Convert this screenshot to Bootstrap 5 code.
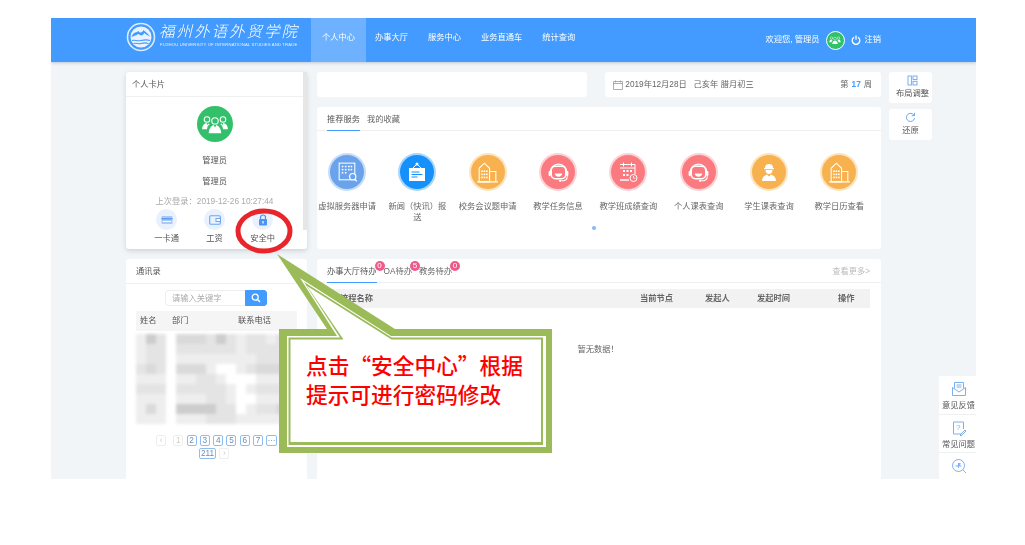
<!DOCTYPE html>
<html lang="zh-CN">
<head>
<meta charset="utf-8">
<title>个人中心</title>
<link href="https://cdn.jsdelivr.net/npm/bootstrap@5.3.0/dist/css/bootstrap.min.css" rel="stylesheet">
<style>
html,body{height:545px;overflow:hidden;background:#fff}
body{margin:0;font-family:"Liberation Sans","Noto Sans CJK SC",sans-serif;font-size:8.25px;line-height:1.3;color:#666}
.shell{width:925px;height:461px;margin:18px 0 0 51px;background:#f2f5f8;overflow:hidden;position:relative;filter:blur(.45px)}
.topbar{height:44px;background:#439bff;box-shadow:0 1px 3px rgba(60,90,130,.3);color:#fff;padding-left:75px;position:relative}
.brand{width:185px;height:44px;position:relative;flex:none}
.brand-cn{position:absolute;left:33px;top:2px;font-size:15.5px;letter-spacing:2px;line-height:20px;font-style:italic;font-weight:300;white-space:nowrap;font-family:"Noto Sans CJK SC",sans-serif}
.brand-en{position:absolute;left:34px;top:24px;font-size:4.25px;line-height:5px;letter-spacing:.12px;white-space:nowrap;opacity:.85}
.brand svg{position:absolute;left:0;top:4px}
.topnav a{display:block;height:44px;line-height:40px;padding:0 10px;color:#fff;text-decoration:none}
.topnav a.on{background:#6db1ff;padding:0 11px;margin-right:-1px}
.userbox{margin-right:95px;gap:6px}
.userbox .hello{margin-top:1px}
.ava-sm{width:19px;height:19px;border-radius:50%;background:#33c06b;border:1.5px solid #fff;display:flex;align-items:center;justify-content:center}
.body-row{padding:10px 0 0 75px;gap:10px}
.col-left{width:181px;gap:10px}
.col-main{width:564px}
.col-side{width:43px;margin-left:-2px;gap:6px}
.sheet{border:0;border-radius:3px;background:#fff}
.sheet-head{height:25px;border-bottom:1px solid #eef0f2;padding:0 10px;line-height:26px;color:#555}
.card-me .sheet-head{padding:0 6px}
.card-me{height:177px;box-shadow:0 2px 5px rgba(80,90,110,.22);padding-right:4px;position:relative}
.card-me::after{content:"";position:absolute;right:0;top:0;width:4px;height:158px;background:#e6e6e6}
.ava-lg{width:36px;height:36px;border-radius:50%;background:#33c06b;margin:9px auto 0;display:flex;align-items:center;justify-content:center}
.me-name{height:21px;line-height:21px;text-align:center;color:#555}
.me-last{text-align:center;color:#aaa;line-height:14px;margin-top:3px}
.quick{justify-content:center;gap:0;margin-top:0}
.quick>div{width:48px;text-align:center;color:#555}
.quick-disc{width:21px;height:21px;border-radius:50%;background:#e8f1fd;margin:0 auto 4px;display:flex;align-items:center;justify-content:center}
.card-book{height:230px}
.book-body{padding:6px 10px 0}
.finder{width:102px;height:16px;margin:0 0 5px 29px;flex-wrap:nowrap}
.finder .form-control{height:16px;min-height:0;padding:0 6px;font-size:8.25px;border:1px solid #eceff2;border-radius:3px 0 0 3px;color:#aaa;box-shadow:none}
.finder .form-control::placeholder{color:#aaa}
.finder .btn{height:16px;width:22px;padding:0;border-radius:0 3px 3px 0;background:#439bff;border-color:#439bff;display:flex;align-items:center;justify-content:center}
.book-head{height:20px;line-height:20px;background:#f5f5f5;color:#555;width:161px;position:relative}
.book-head span:nth-child(1){margin-left:4px;width:32px}
.book-head span:nth-child(2){width:66px}
.mosaic{display:grid;grid-template-columns:repeat(16,10px);grid-auto-rows:10px;margin-top:3px;filter:blur(1.4px)}
.mosaic i{display:block}
.t0{background:#fff}.t1{background:#eee}.t2{background:#e4e4e4}.t3{background:#dadada}.t4{background:#cdcdcd}
.pager{margin:11px 0 0 20px;width:130px;gap:2px 3.3px;flex-wrap:wrap}
.pg{min-width:10px;height:11px;line-height:9px;border:1px solid #8fbdee;border-radius:2px;text-align:center;color:#6b8fb8;font-size:8.25px;background:#fff}
.pg.off{border-color:#eee;color:#ccc}
.pg.wide{min-width:17px;margin-left:43px}
.strip{height:25px}
.strip-blank{width:270px;border-radius:3px}
.strip-date{width:276px;margin-left:18px;padding:1px 9px 0 8px;color:#666}
.strip-date b{color:#439bff;margin:0 3px}
.card-svc{height:142px;margin-top:10px;position:relative}
.tabset{gap:7px;height:24px;padding:0 10px;border-bottom:1px solid #eef0f2}
.tabset a{display:block;height:24px;line-height:25px;color:#666;text-decoration:none;position:relative}
.tabset a.on{color:#555;border-bottom:1.5px solid #439bff}
.svc-row{margin:22px 0 0 -5px}
.svc{width:70.3px;padding:0 6px;text-align:center;color:#666;flex:none}
.svc-disc{width:34px;height:34px;border-radius:50%;margin:2px auto 13px;display:flex;align-items:center;justify-content:center}
.c-steel{background:#6aa3ec;box-shadow:0 0 0 2px #c6dcf8}
.c-blue{background:#1690fb;box-shadow:0 0 0 2px #a9d6fd}
.c-amber{background:#f7b24f;box-shadow:0 0 0 2px #fde4bf}
.c-rose{background:#fb7a80;box-shadow:0 0 0 2px #fcd2d5}
.dotmark{width:4px;height:4px;border-radius:50%;background:#86b9f3;position:absolute;left:275px;top:119px}
.card-todo{height:230px;margin-top:10px;position:relative}
.count{position:absolute;top:2px;right:-8px;width:10px;height:10px;border-radius:50%;background:#ee5b8b;color:#fff;font-size:8px;line-height:10px;text-align:center;z-index:1}
.more{position:absolute;right:11px;top:8px;color:#bbb}
.todo-head{height:19px;line-height:19px;margin:6px 11px 0 10px;background:#f2f2f2;font-weight:700;color:#666;position:relative}
.todo-head span{position:absolute;top:0}
.none{text-align:center;padding-top:37px;margin-right:2px}
.tool{height:31px;text-align:center;color:#555;padding-top:3px;line-height:11px;border-radius:3px}
.tool svg{margin-bottom:2px}
.dock{position:absolute;right:0;top:358px;width:37px;height:103px;background:#fff;overflow:hidden}
.dock>div{height:38.5px;border-bottom:1px solid #eef0f2;padding:5px 0 0 2px;white-space:nowrap;color:#555;text-align:center;line-height:11px}
.dock svg{margin-bottom:3px}
.ring{position:absolute;left:232px;top:205px}
.note{position:absolute;left:275px;top:250px;width:280px;height:206px}
.note svg{position:absolute;left:0;top:0}
.note-text{position:absolute;left:31px;top:100px;color:#f00;font:500 21.7px/29px "Noto Sans CJK SC",sans-serif;white-space:nowrap;margin:0}
</style>
</head>
<body>
<svg width="0" height="0" class="d-block position-absolute">
<defs>
<symbol id="i-people" viewBox="0 0 36 36"><g fill="#fff"><circle cx="9" cy="13" r="3.1" fill="none" stroke="#fff" stroke-width="1.2"/><circle cx="27" cy="13" r="3.1" fill="none" stroke="#fff" stroke-width="1.2"/><circle cx="18" cy="14.5" r="3.6" fill="none" stroke="#fff" stroke-width="1.2"/><path d="M3.5 24c0-4 2-6.500 5-7l1 2 1-1.500 1.500.8c-2 1.500-3 3.500-3 5.700z"/><path d="M32.500 24c0-4-2-6.500-5-7l-1 2-1-1.500-1.500.8c2 1.500 3 3.500 3 5.700z"/><path d="M11 28.500c0-5 2.500-8.500 5.500-9.500l1.500 3 1.500-3c3 1 5.500 4.500 5.500 9.500z"/></g></symbol>
<symbol id="i-tower" viewBox="0 0 24 24"><g fill="none" stroke="#fff" stroke-width="1"><path d="M4 21V8l5-5 5 5v13z"/><path d="M14 11h6v10h-6M2 21h20"/></g><g fill="#fff"><rect x="6" y="10" width="1.500" height="1.500"/><rect x="8.300" y="10" width="1.500" height="1.500"/><rect x="10.600" y="10" width="1.500" height="1.500"/><rect x="6" y="13" width="1.500" height="1.500"/><rect x="8.300" y="13" width="1.500" height="1.500"/><rect x="10.600" y="13" width="1.500" height="1.500"/><rect x="6" y="16" width="1.500" height="1.500"/><rect x="8.300" y="16" width="1.500" height="1.500"/><rect x="10.600" y="16" width="1.500" height="1.500"/></g></symbol>
<symbol id="i-head" viewBox="0 0 24 24"><path d="M4 12a8 8 0 0 1 16 0" fill="none" stroke="#fff" stroke-width="1.300"/><rect x="5" y="6" width="14" height="12" rx="4" fill="none" stroke="#fff" stroke-width="1.500"/><path d="M8.500 13h7c0 2-1.500 3-3.500 3s-3.500-1-3.500-3z" fill="#fff"/><rect x="2.500" y="10.500" width="2.200" height="5" rx="1" fill="#fff"/><rect x="19.300" y="10.500" width="2.200" height="5" rx="1" fill="#fff"/><path d="M20.500 15.500c0 3-2.500 4.500-6 4.500" fill="none" stroke="#fff"/><circle cx="13.500" cy="20" r="1.100" fill="#fff"/></symbol>
</defs>
</svg>

<div class="shell">
  <header class="topbar d-flex align-items-start">
    <div class="brand">
      <svg width="30" height="30" viewBox="0 0 30 30"><circle cx="15" cy="15" r="13.500" fill="none" stroke="#dcecff" stroke-width="1.600"/><circle cx="15" cy="15" r="10.500" fill="#e9f3ff"/><path d="M5.500 15c2.500-6 5-4 7-6 2 3 4 1 5-1 2 2 4 3 7 7-3-2-4-2-6-4-2 3-4 3-6 1-2 1-4 2-7 3z" fill="#439bff"/><path d="M6 18.500c3-1.200 5 1 9 0s6-1 9 0M7.500 21.500c3-1 5 .8 7.500 0s5-.8 7.500 0" fill="none" stroke="#439bff" stroke-width="1.100"/></svg>
      <div class="brand-cn">福州外语外贸学院</div>
      <div class="brand-en">FUZHOU UNIVERSITY OF INTERNATIONAL STUDIES AND TRADE</div>
    </div>
    <nav class="topnav d-flex">
      <a class="on" href="#">个人中心</a>
      <a href="#">办事大厅</a>
      <a href="#">服务中心</a>
      <a href="#">业务直通车</a>
      <a href="#">统计查询</a>
    </nav>
    <div class="userbox ms-auto d-flex align-items-center h-100">
      <span class="hello">欢迎您, 管理员</span>
      <span class="ava-sm"><svg width="14" height="14"><use href="#i-people"/></svg></span>
      <span class="d-flex align-items-center gap-1"><svg width="10" height="10" viewBox="0 0 10 10"><path d="M3 2.300a3.800 3.800 0 1 0 4 0" fill="none" stroke="#fff" stroke-width="1.300"/><path d="M5 .5v4.300" stroke="#fff" stroke-width="1.300"/></svg>注销</span>
    </div>
  </header>

  <div class="body-row d-flex align-items-start">
    <aside class="col-left d-flex flex-column">
      <section class="card sheet card-me">
        <div class="sheet-head">个人卡片</div>
        <div class="ava-lg"><svg width="32" height="32"><use href="#i-people"/></svg></div>
        <div class="me-name mt-2">管理员</div>
        <div class="me-name">管理员</div>
        <div class="me-last">上次登录：2019-12-26 10:27:44</div>
        <div class="quick d-flex">
          <div><div class="quick-disc"><svg width="12" height="10" viewBox="0 0 12 10"><rect x=".5" y="1" width="11" height="8" rx="1" fill="#a9c9f5"/><rect x=".5" y="3" width="11" height="1.500" fill="#5e9df0"/><rect x="2" y="6" width="8" height="1" fill="#fff"/></svg></div>一卡通</div>
          <div><div class="quick-disc"><svg width="12" height="10" viewBox="0 0 12 10"><rect x=".7" y=".7" width="10.600" height="8.600" rx="1" fill="none" stroke="#6ea7f0" stroke-width="1.100"/><rect x="7" y="3.500" width="4.500" height="3" fill="#fff" stroke="#6ea7f0"/></svg></div>工资</div>
          <div><div class="quick-disc"><svg width="10" height="12" viewBox="0 0 10 12"><path d="M2.500 5V3.500a2.500 2.500 0 0 1 5 0V5" fill="none" stroke="#4b94f2" stroke-width="1.200"/><rect x="1" y="5" width="8" height="6.500" rx="1" fill="#4b94f2"/><rect x="4.400" y="7" width="1.200" height="2.500" fill="#fff"/></svg></div>安全中</div>
        </div>
      </section>

      <section class="card sheet card-book">
        <div class="sheet-head">通讯录</div>
        <div class="book-body">
          <div class="input-group finder">
            <input class="form-control" type="text" placeholder="请输入关键字">
            <button class="btn btn-primary" type="button" aria-label="搜索"><svg width="10" height="10" viewBox="0 0 10 10"><circle cx="4.200" cy="4.200" r="3" fill="none" stroke="#fff" stroke-width="1.300"/><path d="M6.500 6.500 9 9" stroke="#fff" stroke-width="1.400"/></svg></button>
          </div>
          <div class="book-head d-flex"><span>姓名</span><span>部门</span><span>联系电话</span></div>
          <div class="mosaic">
            <i class="t1"></i><i class="t4"></i><i class="t2"></i><i class="t0"></i><i class="t3"></i><i class="t3"></i><i class="t3"></i><i class="t2"></i><i class="t4"></i><i class="t2"></i><i class="t1"></i><i class="t2"></i><i class="t2"></i><i class="t1"></i><i class="t2"></i><i class="t2"></i>
            <i class="t1"></i><i class="t2"></i><i class="t2"></i><i class="t0"></i><i class="t2"></i><i class="t2"></i><i class="t2"></i><i class="t2"></i><i class="t2"></i><i class="t2"></i><i class="t1"></i><i class="t2"></i><i class="t2"></i><i class="t2"></i><i class="t2"></i><i class="t2"></i>
            <i class="t1"></i><i class="t2"></i><i class="t2"></i><i class="t0"></i><i class="t1"></i><i class="t1"></i><i class="t1"></i><i class="t1"></i><i class="t1"></i><i class="t1"></i><i class="t1"></i><i class="t1"></i><i class="t2"></i><i class="t2"></i><i class="t2"></i><i class="t2"></i>
            <i class="t2"></i><i class="t3"></i><i class="t2"></i><i class="t0"></i><i class="t3"></i><i class="t3"></i><i class="t3"></i><i class="t1"></i><i class="t0"></i><i class="t0"></i><i class="t1"></i><i class="t2"></i><i class="t3"></i><i class="t3"></i><i class="t3"></i><i class="t3"></i>
            <i class="t1"></i><i class="t1"></i><i class="t1"></i><i class="t0"></i><i class="t1"></i><i class="t1"></i><i class="t2"></i><i class="t2"></i><i class="t1"></i><i class="t0"></i><i class="t0"></i><i class="t0"></i><i class="t1"></i><i class="t1"></i><i class="t1"></i><i class="t1"></i>
            <i class="t2"></i><i class="t2"></i><i class="t2"></i><i class="t0"></i><i class="t2"></i><i class="t2"></i><i class="t2"></i><i class="t2"></i><i class="t2"></i><i class="t1"></i><i class="t0"></i><i class="t1"></i><i class="t2"></i><i class="t2"></i><i class="t2"></i><i class="t2"></i>
            <i class="t1"></i><i class="t1"></i><i class="t1"></i><i class="t0"></i><i class="t1"></i><i class="t1"></i><i class="t1"></i><i class="t2"></i><i class="t2"></i><i class="t1"></i><i class="t0"></i><i class="t0"></i><i class="t1"></i><i class="t1"></i><i class="t1"></i><i class="t1"></i>
            <i class="t1"></i><i class="t3"></i><i class="t1"></i><i class="t0"></i><i class="t4"></i><i class="t4"></i><i class="t4"></i><i class="t4"></i><i class="t2"></i><i class="t2"></i><i class="t0"></i><i class="t1"></i><i class="t2"></i><i class="t2"></i><i class="t3"></i><i class="t2"></i>
            <i class="t1"></i><i class="t1"></i><i class="t1"></i><i class="t0"></i><i class="t1"></i><i class="t1"></i><i class="t1"></i><i class="t2"></i><i class="t2"></i><i class="t2"></i><i class="t1"></i><i class="t1"></i><i class="t1"></i><i class="t1"></i><i class="t1"></i><i class="t1"></i>
          </div>
          <div class="pager d-flex">
            <span class="pg off">‹</span><span class="pg off ms-1">1</span><span class="pg">2</span><span class="pg">3</span><span class="pg">4</span><span class="pg">5</span><span class="pg">6</span><span class="pg">7</span><span class="pg">···</span>
            <span class="pg wide">211</span><span class="pg off">›</span>
          </div>
        </div>
      </section>
    </aside>

    <main class="col-main">
      <div class="strip d-flex">
        <div class="card sheet strip-blank"></div>
        <div class="card sheet strip-date flex-row align-items-center justify-content-between">
          <span class="d-flex align-items-center gap-0"><svg class="me-0" width="10" height="10" viewBox="0 0 10 10"><path d="M.5 1.500h9v8h-9zM.5 3.500h9M2.500.5v2M7.500.5v2" fill="none" stroke="#999" stroke-width=".8"/></svg>&nbsp;2019年12月28日 &nbsp; 己亥年 腊月初三</span>
          <span>第<b>17</b>周</span>
        </div>
      </div>

      <section class="card sheet card-svc">
        <div class="tabset d-flex"><a class="on" href="#">推荐服务</a><a href="#">我的收藏</a></div>
        <div class="svc-row d-flex align-items-start">
          <div class="svc"><div class="svc-disc c-steel"><svg width="25" height="25" viewBox="0 0 24 24"><rect x="4" y="3" width="15" height="16" fill="none" stroke="#fff"/><g fill="#fff"><rect x="6.500" y="5.500" width="1.500" height="1.500"/><rect x="9.500" y="5.500" width="1.500" height="1.500"/><rect x="12.500" y="5.500" width="1.500" height="1.500"/><rect x="15" y="5.500" width="1.500" height="1.500"/><rect x="6.500" y="8.500" width="1.500" height="1.500"/><rect x="9.500" y="8.500" width="1.500" height="1.500"/><rect x="12.500" y="8.500" width="1.500" height="1.500"/><rect x="15" y="8.500" width="1.500" height="1.500"/><rect x="6.500" y="11.500" width="1.500" height="1.500"/><rect x="9.500" y="11.500" width="1.500" height="1.500"/></g><circle cx="17" cy="16" r="3" fill="#6aa3ec" stroke="#fff" stroke-width="1.100"/><path d="m19 18.500 2 2" stroke="#fff" stroke-width="1.200"/></svg></div>虚拟服务器申请</div>
          <div class="svc"><div class="svc-disc c-blue"><svg width="24" height="24" viewBox="0 0 24 24"><rect x="4" y="8" width="16" height="13" fill="#fff"/><path d="M8 8l4-4 4 4" fill="none" stroke="#fff"/><circle cx="12" cy="4" r="1.500" fill="#fff"/><path d="M6.500 12h8M6.500 14.500h11M6.500 17h6" stroke="#1690fb" stroke-width="1.200"/></svg></div>新闻（快讯）报送</div>
          <div class="svc"><div class="svc-disc c-amber"><svg width="25" height="25"><use href="#i-tower"/></svg></div>校务会议题申请</div>
          <div class="svc"><div class="svc-disc c-rose"><svg width="25" height="25"><use href="#i-head"/></svg></div>教学任务信息</div>
          <div class="svc"><div class="svc-disc c-rose"><svg width="24" height="24" viewBox="0 0 24 24"><path d="M4 4.500h15V14M13 20H4z" fill="none" stroke="#fff"/><path d="M4 8h15M7.500 2.500v4M15.500 2.500v4" stroke="#fff"/><g fill="#fff"><rect x="7" y="10" width="2" height="2"/><rect x="10.500" y="10" width="2" height="2"/><rect x="14" y="10" width="2" height="2"/><rect x="7" y="14" width="2" height="2"/><rect x="10.500" y="14" width="2" height="2"/></g><circle cx="17.500" cy="18" r="3.500" fill="none" stroke="#fff"/><path d="M17.500 16v2.200h1.800" fill="none" stroke="#fff" stroke-width=".8"/></svg></div>教学班成绩查询</div>
          <div class="svc"><div class="svc-disc c-rose"><svg width="25" height="25"><use href="#i-head"/></svg></div>个人课表查询</div>
          <div class="svc"><div class="svc-disc c-amber"><svg width="24" height="24" viewBox="0 0 24 24"><g fill="#fff"><path d="M8 8a4 4 0 0 1 8 0z"/><rect x="7" y="8" width="10" height="1.200"/><path d="M8.500 10h7c0 2.500-1.500 4-3.500 4s-3.500-1.500-3.500-4z"/><path d="M5 21c0-3.500 2-5.500 5-6.500l2 2 2-2c3 1 5 3 5 6.500z"/></g></svg></div>学生课表查询</div>
          <div class="svc"><div class="svc-disc c-amber"><svg width="25" height="25"><use href="#i-tower"/></svg></div>教学日历查看</div>
        </div>
        <span class="dotmark"></span>
      </section>

      <section class="card sheet card-todo">
        <div class="tabset d-flex">
          <a class="on" href="#">办事大厅待办<span class="count">0</span></a>
          <a href="#">OA待办<span class="count">5</span></a>
          <a href="#">教务待办<span class="count">0</span></a>
        </div>
        <a class="more text-decoration-none" href="#">查看更多&gt;</a>
        <div class="todo-head">
          <span style="left:13px">流程名称</span><span style="left:313px">当前节点</span><span style="left:378px">发起人</span><span style="left:430px">发起时间</span><span style="left:511px">操作</span>
        </div>
        <div class="none">暂无数据！</div>
      </section>
    </main>

    <aside class="col-side d-flex flex-column">
      <div class="card sheet tool ps-1"><svg class="mx-auto" width="11" height="11" viewBox="0 0 11 11"><g fill="none" stroke="#6ea7f0" stroke-width=".9"><rect x="1" y="1" width="3.400" height="9"/><rect x="6" y="1" width="4" height="3.500"/><rect x="6" y="6.300" width="4" height="3.700"/></g></svg>布局调整</div>
      <div class="card sheet tool"><svg class="mx-auto" width="11" height="11" viewBox="0 0 11 11"><path d="M9 3.200A4.100 4.100 0 1 0 9.600 6" fill="none" stroke="#6ea7f0" stroke-width="1"/><path d="M9.500 .8v2.900H6.700" fill="none" stroke="#6ea7f0" stroke-width="1"/></svg>还原</div>
    </aside>
  </div>

  <div class="dock">
    <div><svg class="d-block mx-auto" width="16" height="16" viewBox="0 0 16 16"><g fill="none" stroke="#7eb0f0" stroke-width="1"><path d="M1.500 6.500v8h13v-8"/><path d="M3.500 7.500V1.500h9v6"/><path d="M1.500 6.500 8 11l6.500-4.500"/><path d="M5.500 4h5M5.500 6h5"/></g></svg>意见反馈</div>
    <div><svg class="d-block mx-auto" width="16" height="16" viewBox="0 0 16 16"><g fill="none" stroke="#7eb0f0" stroke-width="1"><path d="M10.500 14H2.500V2h10v7"/><path d="M9 15l5-5 1 1-5 5z"/></g><text x="5" y="10" font-size="8" fill="#7eb0f0">?</text></svg>常见问题</div>
    <div class="border-0"><svg class="d-block mx-auto" width="16" height="16" viewBox="0 0 16 16"><g fill="none" stroke="#7eb0f0" stroke-width="1"><circle cx="7.500" cy="7.500" r="6"/><path d="m12 12 3 3M4.500 8H7l2-3-.5 3h2M7.500 5v5"/></g></svg></div>
  </div>
</div>

<svg class="ring" width="64" height="52" viewBox="0 0 64 52" aria-hidden="true"><ellipse cx="32" cy="26" rx="26" ry="20" fill="none" stroke="#e8252b" stroke-width="5"/></svg>

<div class="note">
  <svg width="280" height="206" viewBox="275 250 280 206" aria-hidden="true">
    <polygon fill="#9bbb59" points="279,329 327,329 277,254 395,329 552,329 552,453 279,453"/>
    <polygon fill="#fff" points="287,336 337,336 300,278 391,336 546,336 546,447 287,447"/>
    <polygon fill="#9bbb59" points="288.500,337.500 340,337.500 304,282 391.700,337.500 543,337.500 543,445 288.500,445"/>
    <polygon fill="#fff" points="290.500,339.500 343.500,339.500 307,286 391.500,339.500 541,339.500 541,442 290.500,442"/>
  </svg>
  <p class="note-text">点击“安全中心”根据<br>提示可进行密码修改</p>
</div>
</body>
</html>
